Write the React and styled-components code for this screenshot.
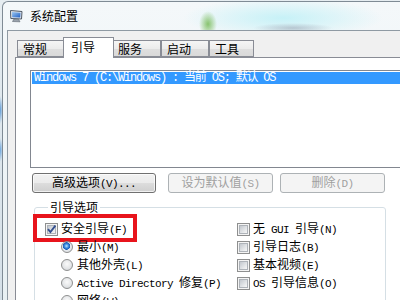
import React from "react";
import styled, { createGlobalStyle } from "styled-components";

const GlobalStyle = createGlobalStyle`
  html, body {
    margin: 0;
    padding: 0;
  }
  body {
    width: 400px;
    height: 300px;
    overflow: hidden;
    font-family: "Noto Sans CJK SC", "Liberation Sans", sans-serif;
    font-size: 12px;
    color: #000;
  }
`;

const tabs = [
  { label: "常规", w: 48 },
  { label: "引导", w: 47, active: true },
  { label: "服务", w: 49 },
  { label: "启动", w: 48 },
  { label: "工具", w: 45 },
];

const leftRadios = [
  { label: "最小(M)", on: true },
  { label: "其他外壳(L)" },
  { label: "Active Directory 修复(P)" },
  { label: "网络(W)" },
];

const rightChecks = ["无 GUI 引导(N)", "引导日志(B)", "基本视频(E)", "OS 引导信息(O)"];

// half-width latin runs are set in a mono face, like the dialog's system font
function Label({ text }) {
  const parts = text.split(/([\x20-\x7e]+)/).filter(Boolean);
  return (
    <span>
      {parts.map((p, i) => (/^[\x20-\x7e]+$/.test(p) ? <Mono key={i}>{p}</Mono> : p))}
    </span>
  );
}

function MonitorIcon() {
  return (
    <svg width="15" height="14" viewBox="0 0 15 14">
      <defs>
        <linearGradient id="scr" x1="0" y1="0" x2="1" y2="1">
          <stop offset="0" stopColor="#9cc8f2" />
          <stop offset="1" stopColor="#1f5fc4" />
        </linearGradient>
      </defs>
      <path d="M1.5 1.5 L13 2.5 L12.5 10 L1.8 9.5 Z" fill="#e4e8ee" stroke="#4f5a68" />
      <path d="M3 3 L11.5 3.8 L11.2 8.6 L3.2 8.2 Z" fill="url(#scr)" />
      <path d="M5 10 L9.5 10.2 L11 12.8 L3.5 12.5 Z" fill="#9aa3ad" stroke="#5d6670" strokeWidth="0.6" />
    </svg>
  );
}

function CheckBox({ checked }) {
  return (
    <Box>
      <BoxInner />
      {checked && (
        <CheckMark width="13" height="13" viewBox="0 0 13 13">
          <path d="M3 6.2 L5.4 9 L10.4 2.6" fill="none" stroke="#34508f" strokeWidth="1.9" />
        </CheckMark>
      )}
    </Box>
  );
}

export default function App() {
  return (
    <>
      <GlobalStyle />
      <Desktop>
        <Window>
          <TitleBar>
            <MonitorIcon />
            <Title>系统配置</Title>
          </TitleBar>
          <Client>
            <TabRow>
              {tabs.map((t) => (
                <Tab key={t.label} $w={t.w} $active={t.active}>
                  {t.label}
                </Tab>
              ))}
            </TabRow>
            <Panel>
              <ListBox>
                <ListItem>Windows 7 (C:\Windows) : 当前 OS; 默认 OS</ListItem>
              </ListBox>
              <ButtonRow>
                <Button $w={124}>
                  <Label text="高级选项(V)..." />
                </Button>
                <Button $w={105} $gap={12} disabled>
                  <Label text="设为默认值(S)" />
                </Button>
                <Button $w={105} $gap={7} disabled>
                  <Label text="删除(D)" />
                </Button>
              </ButtonRow>
              <Group>
                <Legend>引导选项</Legend>
                <Options>
                  <Column>
                    <Row>
                      <Highlight />
                      <CheckBox checked />
                      <Label text="安全引导(F)" />
                    </Row>
                    {leftRadios.map((r) => (
                      <Row key={r.label} $indent={16}>
                        <Radio $on={r.on} />
                        <Label text={r.label} />
                      </Row>
                    ))}
                  </Column>
                  <Column>
                    {rightChecks.map((c) => (
                      <Row key={c}>
                        <CheckBox />
                        <Label text={c} />
                      </Row>
                    ))}
                  </Column>
                </Options>
              </Group>
            </Panel>
          </Client>
        </Window>
      </Desktop>
    </>
  );
}

const Desktop = styled.div`
  width: 400px;
  height: 300px;
  box-sizing: border-box;
  padding: 1px 0 0 2px;
  overflow: hidden;
  background:
    radial-gradient(ellipse 3px 14px at 0px 110px, #5d9ad6, transparent),
    radial-gradient(ellipse 3px 12px at 0px 150px, #6aa4dc, transparent),
    linear-gradient(180deg, #e6edf1 0%, #d5e0e8 100%);
`;

const Window = styled.div`
  height: 100%;
  display: flex;
  flex-direction: column;
  overflow: hidden;
  border-top: 1px solid #7f8b95;
  border-left: 1px solid #7f8b95;
  border-top-left-radius: 6px;
  background:
    radial-gradient(ellipse 9px 13px at 205px 22px, rgba(118, 186, 86, 0.85), transparent),
    radial-gradient(ellipse 40px 5px at 290px 26px, rgba(150, 160, 175, 0.55), transparent),
    radial-gradient(ellipse 100px 20px at 280px 16px, rgba(196, 241, 247, 0.95), transparent),
    linear-gradient(180deg, #f4f8fa 0%, #e8f0f3 100%);
`;

const TitleBar = styled.div`
  flex: none;
  height: 28px;
  display: flex;
  align-items: center;
  gap: 6px;
  padding-left: 6px;
`;

const Title = styled.span`
  font-size: 12px;
  line-height: 14px;
  color: #000;
`;

const Client = styled.div`
  flex: 1;
  min-height: 0;
  display: flex;
  flex-direction: column;
  margin-left: 4px;
  padding: 6px 0 0 7px;
  background: #f0f0f0;
  border-top: 1px solid #8f9aa3;
  border-left: 1px solid #8f9aa3;
`;

const TabRow = styled.div`
  flex: none;
  position: relative;
  z-index: 1;
  height: 20px;
  display: flex;
  align-items: flex-end;
  margin-left: 2px;
`;

const Tab = styled.div`
  box-sizing: border-box;
  width: ${(p) => (p.$active ? p.$w + 4 : p.$w)}px;
  height: ${(p) => (p.$active ? 21 : 17)}px;
  margin: 0 ${(p) => (p.$active ? -2 : 0)}px ${(p) => (p.$active ? -1 : 0)}px;
  padding-left: ${(p) => (p.$active ? 7 : 5)}px;
  padding-top: ${(p) => (p.$active ? 2 : 1)}px;
  border: 1px solid #898c95;
  border-bottom: ${(p) => (p.$active ? "none" : "1px solid #898c95")};
  background: ${(p) =>
    p.$active ? "#fff" : "linear-gradient(180deg, #f5f5f5 0%, #ececec 50%, #dfdfdf 51%, #d9d9d9 100%)"};
  position: relative;
  z-index: ${(p) => (p.$active ? 2 : 0)};
  font-size: 12px;
  line-height: 14px;
  white-space: nowrap;
`;

const Panel = styled.div`
  flex: 1;
  min-height: 0;
  background: #fff;
  border-top: 1px solid #898c95;
  border-left: 1px solid #898c95;
  padding: 12px 0 0 14px;
`;

const ListBox = styled.div`
  width: 380px;
  height: 98px;
  box-sizing: border-box;
  border: 1px solid #828790;
  padding: 1px;
`;

const ListItem = styled.div`
  height: 12px;
  padding-left: 2px;
  background: #3399ff;
  color: #fff;
  font-family: "Liberation Mono", "Noto Sans CJK SC", monospace;
  font-size: 12px;
  line-height: 12px;
  letter-spacing: -1.2px;
  white-space: nowrap;
`;

const Mono = styled.span`
  font-family: "Liberation Mono", monospace;
  font-size: 11px;
  letter-spacing: -0.6px;
  white-space: pre;
`;

const ButtonRow = styled.div`
  display: flex;
  margin-top: 5px;
  padding-left: 2px;
`;

const Button = styled.button`
  width: ${(p) => p.$w}px;
  height: 20px;
  margin-left: ${(p) => p.$gap || 0}px;
  padding: 0;
  border-radius: 3px;
  font-family: "Noto Sans CJK SC", "Liberation Sans", sans-serif;
  font-size: 12px;
  line-height: 16px;
  color: #000;
  border: 1px solid #707070;
  background: linear-gradient(180deg, #f2f2f2 0%, #ebebeb 50%, #dddddd 51%, #cfcfcf 100%);
  box-shadow: inset 0 0 0 1px rgba(255, 255, 255, 0.7);

  &:disabled {
    color: #a0a0a0;
    border-color: #adb2b5;
    background: #f4f4f4;
    box-shadow: none;
  }
`;

const Group = styled.fieldset`
  width: 352px;
  box-sizing: border-box;
  margin: 7px 0 0 4px;
  padding: 0 0 0 10px;
  min-inline-size: 0;
  border: 1px solid #d5dfe5;
  border-radius: 3px;
`;

const Legend = styled.legend`
  margin-left: 3px;
  padding: 0 2px;
  font-size: 12px;
  line-height: 14px;
`;

const Options = styled.div`
  display: grid;
  grid-template-columns: 192px 1fr;
  padding-top: 6px;
`;

const Column = styled.div`
  display: flex;
  flex-direction: column;
`;

const Row = styled.div`
  position: relative;
  height: 18px;
  display: flex;
  align-items: center;
  gap: 3px;
  padding-left: ${(p) => p.$indent || 0}px;
  font-size: 12px;
  line-height: 14px;
  white-space: nowrap;
`;

const Highlight = styled.div`
  position: absolute;
  left: -12px;
  top: -6px;
  width: 104px;
  height: 28px;
  box-sizing: border-box;
  border: 4px solid #e8141c;
`;

const Box = styled.span`
  position: relative;
  flex: none;
  width: 13px;
  height: 13px;
  box-sizing: border-box;
  border: 1px solid #8e8f8f;
  background: #f4f4f4;
`;

const BoxInner = styled.span`
  position: absolute;
  inset: 1px;
  border: 1px solid #aeb3b9;
  background: linear-gradient(135deg, #c3c8ce 0%, #e8eaec 70%, #f6f6f6 100%);
`;

const CheckMark = styled.svg`
  position: absolute;
  left: -1px;
  top: -1px;
`;

const Radio = styled.span`
  flex: none;
  width: 12px;
  height: 12px;
  margin-right: 1px;
  box-sizing: border-box;
  border-radius: 50%;
  border: 1px solid #8e8f8f;
  background: ${(p) =>
    p.$on
      ? "radial-gradient(circle at 45% 40%, #bfe4ff 0px, #3d8ee0 2px, #1a5bb8 3.5px, #e9ecef 4px, #d4d8dc 100%)"
      : "radial-gradient(circle at 50% 40%, #fafafa 0%, #e2e4e6 60%, #c9cdd1 100%)"};
`;
